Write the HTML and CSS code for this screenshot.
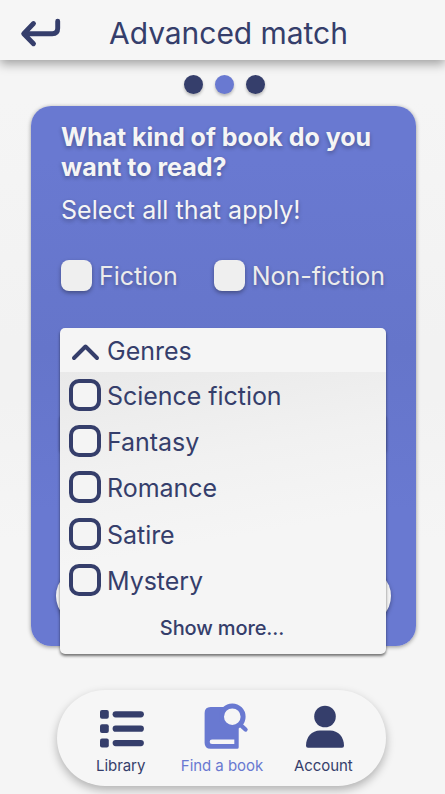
FILE: index.html
```html
<!DOCTYPE html>
<html lang="en">
<head>
<meta charset="utf-8">
<title>Advanced match</title>
<link rel="stylesheet" href="styles.css">
</head>
<body>
<div class="app">
  <header class="topbar">
    <svg class="back" width="44" height="34" viewBox="0 0 44 34" fill="none" stroke="currentColor" stroke-width="4.9" stroke-linecap="round" stroke-linejoin="round"><path d="M37.700 5.300V12.200Q37.700 17.700 32.200 17.700H4M13.500 7.500L3.700 17.700L13.500 27.700"/></svg>
    <h1>Advanced match</h1>
  </header>
  <div class="steps"><i></i><i class="current"></i><i></i></div>
  <main class="card">
    <h2>What kind of book do you want to read?</h2>
    <p class="hint">Select all that apply!</p>
    <div class="kinds">
      <label class="kind"><span class="tile"></span><span>Fiction</span></label>
      <label class="kind"><span class="tile"></span><span>Non-fiction</span></label>
    </div>
    <div class="field"></div>
    <div class="submit"></div>
    <section class="menu">
      <div class="menu-head">
        <svg width="30" height="20" viewBox="0 0 30 20" fill="none" stroke="currentColor" stroke-width="4" stroke-linecap="round" stroke-linejoin="round"><path d="M4 16L15.500 4.500L27 16"/></svg>
        <span>Genres</span>
      </div>
      <ul>
        <li><span class="box"></span><span>Science fiction</span></li>
        <li><span class="box"></span><span>Fantasy</span></li>
        <li><span class="box"></span><span>Romance</span></li>
        <li><span class="box"></span><span>Satire</span></li>
        <li><span class="box"></span><span>Mystery</span></li>
      </ul>
      <div class="more"><span>Show more...</span></div>
    </section>
  </main>
  <nav class="tabs">
    <a class="tab">
      <svg width="50" height="50" viewBox="0 0 50 50" fill="currentColor"><rect x="4" y="10" width="8.800" height="8.800" rx="2"/><rect x="4" y="24.300" width="8.800" height="8.800" rx="2"/><rect x="4" y="38.600" width="8.800" height="8.800" rx="2"/><rect x="16.600" y="11.200" width="31.300" height="6.200" rx="3.100"/><rect x="16.600" y="25.600" width="31.300" height="6.200" rx="3.100"/><rect x="16.600" y="40" width="31.300" height="6.200" rx="3.100"/></svg>
      <span>Library</span>
    </a>
    <a class="tab active">
      <svg width="50" height="50" viewBox="0 0 50 50"><path fill="currentColor" d="M13.600 7H35.300L41.700 20V47.200Q41.700 48.700 40.200 48.700H13.600Q7.600 48.700 7.600 42.700V13Q7.600 7 13.600 7Z"/><path fill="none" stroke="currentColor" stroke-width="4.400" stroke-linecap="round" d="M42 23.500L48.500 29.500"/><circle class="lens" cx="35.300" cy="16.700" r="10.800"/><path class="page" d="M15 39.400H37.300V43.900H15Q12.700 43.900 12.700 41.650Q12.700 39.400 15 39.400Z"/></svg>
      <span>Find a book</span>
    </a>
    <a class="tab">
      <svg width="50" height="50" viewBox="0 0 50 50" fill="currentColor"><circle cx="27" cy="16.500" r="10.800"/><path d="M22 30.500H32C40.200 30.500 46 37 46 45.700Q46 47.700 44 47.700H10Q8 47.700 8 45.700C8 37 13.800 30.500 22 30.500Z"/></svg>
      <span>Account</span>
    </a>
  </nav>
</div>
</body>
</html>
```
FILE: styles.css
```css
* { box-sizing: border-box; }
body { margin: 0; background: #f5f5f5; color: #353e6b; font-family: Inter, sans-serif; font-weight: 400; }
.app { width: 445px; height: 794px; overflow: hidden; display: flex; flex-direction: column; align-items: center; background: linear-gradient(#f5f5f5 100px, #f2f2f2 340px, #f2f2f2 400px, #f5f5f5 540px); }
h1, h2, p, ul { margin: 0; padding: 0; }
svg { display: block; overflow: visible; }
.topbar { flex: none; width: 100%; height: 60px; background: #f6f6f6; box-shadow: 0 4px 10px rgba(0,0,0,.35); display: flex; align-items: center; padding: 0 0 0 20px; }
.back { margin-top: 6px; }
h1 { margin-left: 45px; margin-top: 6px; font-size: 30px; line-height: 36px; font-weight: 400; letter-spacing: -.04px; white-space: nowrap; }
.steps { height: 46px; flex: none; display: flex; gap: 12px; align-items: center; padding: 2px 0 0 4px; }
.steps i { width: 19px; height: 19px; border-radius: 50%; background: #353e6b; box-shadow: 0 2px 3px rgba(0,0,0,.25); }
.steps .current { background: #6979d1; }
.card { position: relative; flex: none; width: 385px; height: 540px; margin-left: 2px; padding: 16px 30px 0; border-radius: 20px; background: linear-gradient(#6979d1 10%, #6575ca 45%, #6979d1 75%); box-shadow: 0 1px 4px rgba(0,0,0,.4); color: #f5f5f5; text-shadow: 0 2px 4px rgba(0,0,0,.3); }
h2 { font-size: 25px; line-height: 30px; font-weight: 700; width: 330px; }
.hint { margin-top: 13px; font-size: 25px; line-height: 30px; letter-spacing: .06px; }
.kinds { display: flex; gap: 36px; margin-top: 19px; height: 62px; align-items: center; white-space: nowrap; font-size: 25px; color: #ececec; letter-spacing: -.05px; }
.kind { display: flex; align-items: center; gap: 7px; }
.kind span + span, li span + span, .menu-head span { padding-top: 2px; }
.tile { width: 31px; height: 31px; border-radius: 8px; background: #efefef; box-shadow: 0 2px 4px rgba(0,0,0,.35); }
.field { position: absolute; left: 28px; top: 308px; width: 328px; height: 38px; border-radius: 5px; background: #5a69b9; box-shadow: 0 2px 3px rgba(0,0,0,.2); }
.submit { position: absolute; left: 25px; top: 462px; width: 335px; height: 56px; border-radius: 28px; background: #f2f2f2; box-shadow: 0 2px 4px rgba(0,0,0,.35); }
.menu { position: absolute; left: 29px; top: 222px; width: 326px; height: 326px; border-radius: 5px; background: #f5f5f5; box-shadow: 0 2px 3px rgba(0,0,0,.55); color: #353e6b; text-shadow: none; overflow: hidden; }
.menu-head { height: 44px; display: flex; align-items: center; padding-left: 10px; gap: 7px; font-size: 25px; }
.menu-head svg { margin-top: 3px; }
ul { list-style: none; background: linear-gradient(170deg, #e9e9e9, #f1f1f1 38%, #f5f5f5 68%); }
li { height: 46.200px; display: flex; align-items: center; padding-left: 9px; gap: 6px; font-size: 25px; letter-spacing: -.04px; white-space: nowrap; }
.box { width: 32px; height: 32px; border: 4px solid #353e6b; border-radius: 10px; background: #f4f4f4; }
.more { text-align: center; margin-top: 13px; padding-right: 2px; font-size: 20px; line-height: 24px; font-weight: 500; letter-spacing: -.12px; }
.tabs { flex: none; width: 329px; height: 96px; margin: 44px 2px 0 0; border-radius: 48px; background: #f6f6f6; box-shadow: 0 4px 10px rgba(0,0,0,.28); display: flex; padding: 10px 12px 0 13px; font-size: 15px; letter-spacing: -.05px; }
.tab { flex: 1; display: flex; flex-direction: column; align-items: center; gap: 6px; white-space: nowrap; line-height: 20px; }
.active { color: #6979d1; }
.page { fill: #f6f6f6; }
.lens { fill: #f6f6f6; stroke: #6979d1; stroke-width: 5px; }
```
